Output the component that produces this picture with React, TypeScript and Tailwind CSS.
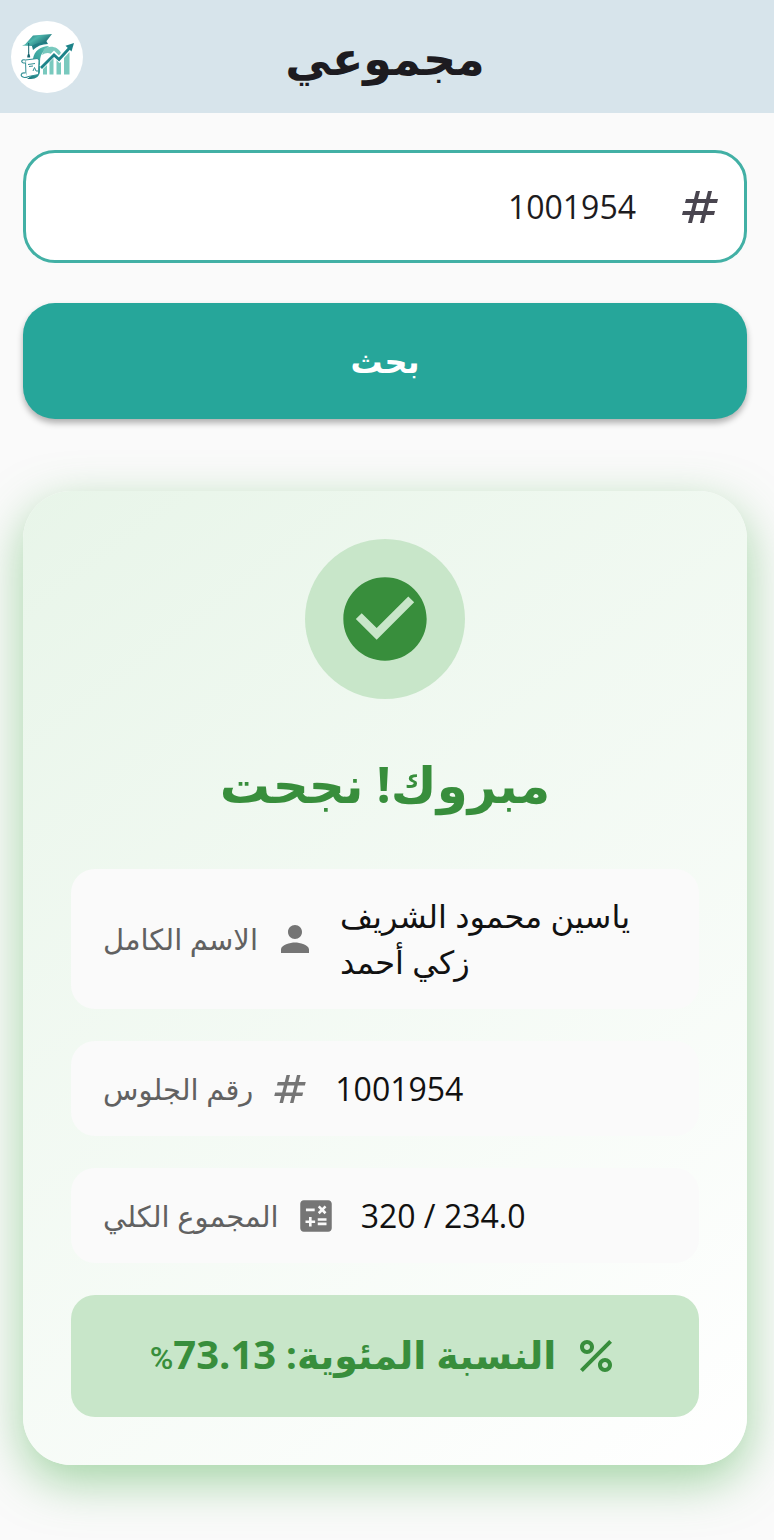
import { useState } from "react";
import type { ReactNode } from "react";
import {
  MdCalculate,
  MdCheckCircle,
  MdNumbers,
  MdPercent,
  MdPerson,
} from "react-icons/md";

const student = {
  name: "ياسين محمود الشريف زكي أحمد",
  seat: "1001954",
  total: "320 / 234.0",
  percent: "73.13",
};

function Logo() {
  return (
    <svg viewBox="0 0 72 72" className="size-[72px] shrink-0" role="img" aria-label="شعار مجموعي">
      <defs>
        <linearGradient id="cap" x1="0" y1="0" x2="1" y2="0.6">
          <stop offset="0" stopColor="#17646e" />
          <stop offset="0.5" stopColor="#4db5ac" />
          <stop offset="1" stopColor="#14626b" />
        </linearGradient>
        <linearGradient id="arch" x1="1" y1="0" x2="0" y2="1">
          <stop offset="0" stopColor="#5fc0b4" />
          <stop offset="0.6" stopColor="#2f9c98" />
          <stop offset="1" stopColor="#1a747b" />
        </linearGradient>
      </defs>
      <circle cx="36" cy="36" r="36" fill="#fff" />
      {/* arch */}
      <path d="M22 38c1-8 8-13 16-13l-5 5c-3 3-4 6-4 11v9c0 5-4 8-9 8h-4l4-3z" fill="url(#arch)" />
      <path d="M33 28c5-4 14-3 17 4l-2 3-5-4-3 2c-3-2-6-1-9 1z" fill="#79c9be" />
      {/* bars */}
      <path d="M32 48l4-4v9.500h-4zM38.500 41l4-4v16.500h-4zM45.500 39l3 3 1.500-1v12.500h-4.500zM53 37l5.500-6v22.500H53z" fill="#79c9be" />
      {/* rising arrow */}
      <path d="M30 46l13-13 5 5 10-11" fill="none" stroke="#fff" strokeWidth="5" />
      <path d="M30 47l13-13 5 4.500 11-12" fill="none" stroke="#1d8389" strokeWidth="2.800" />
      <path d="M54.500 24.700l8.500-2.700-2.500 8.500z" fill="#1d8389" />
      {/* cap */}
      <path d="M20 21.500l15-2 2 3.500c-6 0-11 2-15 6z" fill="#237f85" />
      <path d="M11 24.500l3-1 8-9 19-1.500-7 9c-6-1-10 1-13 3z" fill="url(#cap)" />
      <path d="M17.700 22v10" stroke="#17646e" strokeWidth="1" />
      <path d="M16.300 35l1.400-4 1.400 4v1.500h-2.800z" fill="#17646e" />
      {/* scroll */}
      <path d="M14.500 39l12-1.500 1.500 2-.5 14-12.500 2.500z" fill="#fff" stroke="#318f94" strokeWidth="1" />
      <path d="M14.500 42h-2c-3-1-2-4 2-3M14.500 52c-5-1-6 4-1 4.500 1 0 2 0 3-.5" fill="#fff" stroke="#318f94" strokeWidth="1.200" />
      <path d="M17 43.500l7-1M18 45.500l4-.5M22 50l1.500-3.500L25 50h2" fill="none" stroke="#318f94" strokeWidth="1" />
    </svg>
  );
}

function InfoRow({
  label,
  icon,
  children,
}: {
  label: string;
  icon: ReactNode;
  children: ReactNode;
}) {
  return (
    <div className="flex min-h-[95px] items-center rounded-3xl bg-[#fafafa] px-8 py-6 text-[#757575]">
      <dt className="flex shrink-0 items-center gap-4 text-[29px] leading-[46px]">
        <span className="text-[#616161]">{label}</span>
        {icon}
      </dt>
      <dd className="ml-6 min-w-0 flex-1 text-[32px] leading-[46px] font-medium text-[#111]">
        {children}
      </dd>
    </div>
  );
}

export default function App() {
  const [seat, setSeat] = useState(student.seat);

  return (
    <div
      lang="ar"
      className="min-h-screen overflow-hidden bg-[#fafafa] pb-[75px] font-['Open_Sans','DejaVu_Sans',sans-serif]"
    >
      <header className="grid h-[113px] grid-cols-[72px_1fr_72px] items-center bg-[#d7e4eb] pr-[15px] pl-[11px]">
        <Logo />
        <h1 dir="rtl" className="text-center text-[46px] leading-[72px] font-bold text-[#1d1b20]">
          مجموعي
        </h1>
      </header>

      <main className="pt-[37px] pr-[27px] pl-[23px]">
        <form onSubmit={e => e.preventDefault()}>
          <div className="flex h-[113px] items-center gap-5 rounded-[32px] border-3 border-[#42b0a5] bg-white px-5">
            <input
              id="seat"
              aria-label="رقم الجلوس"
              inputMode="numeric"
              className="min-w-0 flex-1 bg-transparent pr-5 text-right text-[32px] leading-[48px] text-[#1d1b20] outline-none"
              value={seat}
              onChange={e => setSeat(e.target.value)}
            />
            <label htmlFor="seat" className="text-[#49454f]">
              <MdNumbers className="size-12" />
            </label>
          </div>

          <button
            type="submit"
            className="mt-10 h-[116px] w-full rounded-[32px] bg-[#26a69a] text-[32px] font-bold text-white shadow-[0_4px_6px_rgba(0,0,0,0.3)]"
          >
            بحث
          </button>
        </form>

        <section className="mt-[72px] rounded-[48px] bg-linear-143 from-[#e8f5e9] to-white p-12 shadow-[0_16px_48px_rgba(76,175,80,0.5)]">
          <div className="mx-auto flex size-40 items-center justify-center rounded-full bg-[#c8e6c9]">
            <MdCheckCircle className="size-[100px] text-[#388e3c]" />
          </div>
          <h2 dir="rtl" className="mt-8 text-center text-[50px] leading-[106px] font-bold text-[#388e3c]">
            مبروك! نجحت
          </h2>

          <dl className="mt-8 flex flex-col gap-8">
            <InfoRow label="الاسم الكامل" icon={<MdPerson className="size-[42px]" />}>
              <p dir="rtl" className="text-left">
                {student.name}
              </p>
            </InfoRow>
            <InfoRow label="رقم الجلوس" icon={<MdNumbers className="size-[42px]" />}>
              {student.seat}
            </InfoRow>
            <InfoRow label="المجموع الكلي" icon={<MdCalculate className="size-[42px]" />}>
              {student.total}
            </InfoRow>
          </dl>

          <div
            dir="rtl"
            className="mt-8 flex h-[122px] items-center justify-center gap-4 rounded-3xl bg-[#c8e6c9] text-[#388e3c]"
          >
            <MdPercent className="size-12" />
            <p className="text-[38px] leading-[60px] font-bold">
              النسبة المئوية: <span className="text-[40px]">{student.percent}</span>
              <span className="font-['Roboto'] text-[32px] font-medium">%</span>
            </p>
          </div>
        </section>
      </main>
    </div>
  );
}
